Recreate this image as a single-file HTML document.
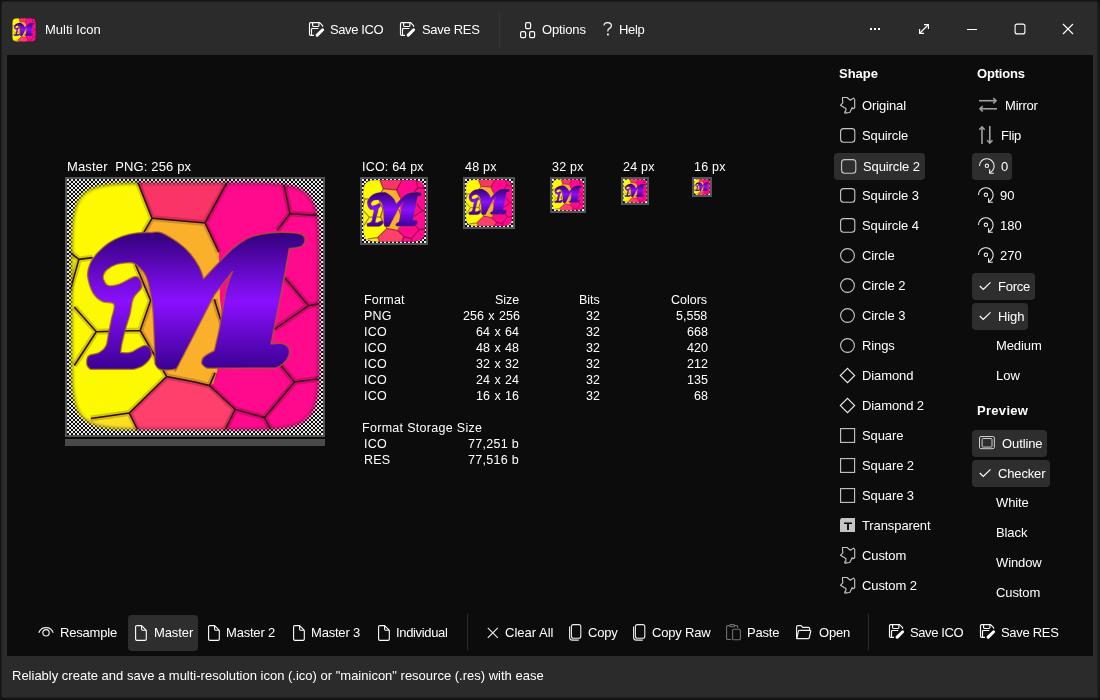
<!DOCTYPE html><html><head><meta charset="utf-8"><style>
html,body{margin:0;padding:0;width:1100px;height:700px;overflow:hidden;background:#2b2b2b;}
body{position:relative;font-family:"Liberation Sans",sans-serif;color:#fff;}
.t{position:absolute;white-space:nowrap;line-height:1;will-change:transform;}
.r{position:absolute;}
.s{position:absolute;overflow:visible;}
.chk{position:absolute;background-color:#e8e8e8;background-image:linear-gradient(45deg,#0d0d0d 25%,transparent 25%,transparent 75%,#0d0d0d 75%),linear-gradient(45deg,#0d0d0d 25%,transparent 25%,transparent 75%,#0d0d0d 75%);background-size:4px 4px;background-position:0 0,2px 2px;}

</style></head><body>
<svg width="0" height="0" style="position:absolute">
<defs>
<linearGradient id="mg" gradientUnits="userSpaceOnUse" x1="0" y1="54" x2="0" y2="191">
<stop offset="0" stop-color="#33007a"/><stop offset="0.5" stop-color="#8a10ff"/><stop offset="1" stop-color="#3a0090"/></linearGradient>
<filter id="bl2" x="-10%" y="-10%" width="120%" height="120%"><feGaussianBlur stdDeviation="1.5"/></filter><mask id="rr" maskUnits="userSpaceOnUse" x="0" y="0" width="256" height="256"><path d="M252.50,127.25 L252.49,170.95 L252.45,180.52 L252.39,187.05 L252.31,192.16 L252.20,196.42 L252.06,200.09 L251.90,203.33 L251.72,206.25 L251.51,208.91 L251.28,211.36 L251.02,213.62 L250.73,215.73 L250.42,217.70 L250.08,219.55 L249.72,221.30 L249.33,222.95 L248.91,224.52 L248.47,226.00 L248.00,227.42 L247.50,228.77 L246.97,230.05 L246.41,231.28 L245.82,232.45 L245.20,233.57 L244.55,234.64 L243.86,235.66 L243.15,236.64 L242.40,237.58 L241.61,238.48 L240.79,239.33 L239.93,240.15 L239.03,240.94 L238.08,241.68 L237.10,242.40 L236.07,243.08 L235.00,243.73 L233.87,244.35 L232.70,244.93 L231.47,245.49 L230.18,246.02 L228.82,246.52 L227.40,246.99 L225.91,247.43 L224.34,247.84 L222.68,248.23 L220.92,248.59 L219.06,248.93 L217.08,249.24 L214.97,249.52 L212.70,249.78 L210.24,250.01 L207.57,250.22 L204.64,250.40 L201.38,250.56 L197.69,250.70 L193.42,250.81 L188.30,250.89 L181.74,250.95 L172.13,250.99 L128.25,251.00 L84.37,250.99 L74.76,250.95 L68.20,250.89 L63.08,250.81 L58.81,250.70 L55.12,250.56 L51.86,250.40 L48.93,250.22 L46.26,250.01 L43.80,249.78 L41.53,249.52 L39.42,249.24 L37.44,248.93 L35.58,248.59 L33.82,248.23 L32.16,247.84 L30.59,247.43 L29.10,246.99 L27.68,246.52 L26.32,246.02 L25.03,245.49 L23.80,244.93 L22.63,244.35 L21.50,243.73 L20.43,243.08 L19.40,242.40 L18.42,241.68 L17.47,240.94 L16.57,240.15 L15.71,239.33 L14.89,238.48 L14.10,237.58 L13.35,236.64 L12.64,235.66 L11.95,234.64 L11.30,233.57 L10.68,232.45 L10.09,231.28 L9.53,230.05 L9.00,228.77 L8.50,227.42 L8.03,226.00 L7.59,224.52 L7.17,222.95 L6.78,221.30 L6.42,219.55 L6.08,217.70 L5.77,215.73 L5.48,213.62 L5.22,211.36 L4.99,208.91 L4.78,206.25 L4.60,203.33 L4.44,200.09 L4.30,196.42 L4.19,192.16 L4.11,187.05 L4.05,180.52 L4.01,170.95 L4.00,127.26 L4.01,83.55 L4.05,73.98 L4.11,67.45 L4.19,62.34 L4.30,58.08 L4.44,54.41 L4.60,51.17 L4.78,48.25 L4.99,45.59 L5.22,43.14 L5.48,40.88 L5.77,38.77 L6.08,36.80 L6.42,34.95 L6.78,33.20 L7.17,31.55 L7.59,29.98 L8.03,28.50 L8.50,27.08 L9.00,25.73 L9.53,24.45 L10.09,23.22 L10.68,22.05 L11.30,20.93 L11.95,19.86 L12.64,18.84 L13.35,17.86 L14.10,16.92 L14.89,16.02 L15.71,15.17 L16.57,14.35 L17.47,13.56 L18.42,12.82 L19.40,12.10 L20.43,11.42 L21.50,10.77 L22.63,10.15 L23.80,9.57 L25.03,9.01 L26.32,8.48 L27.68,7.98 L29.10,7.51 L30.59,7.07 L32.16,6.66 L33.82,6.27 L35.58,5.91 L37.44,5.57 L39.42,5.26 L41.53,4.98 L43.80,4.72 L46.26,4.49 L48.93,4.28 L51.86,4.10 L55.12,3.94 L58.81,3.80 L63.08,3.69 L68.20,3.61 L74.76,3.55 L84.37,3.51 L128.25,3.50 L172.13,3.51 L181.74,3.55 L188.30,3.61 L193.42,3.69 L197.69,3.80 L201.38,3.94 L204.64,4.10 L207.57,4.28 L210.24,4.49 L212.70,4.72 L214.97,4.98 L217.08,5.26 L219.06,5.57 L220.92,5.91 L222.68,6.27 L224.34,6.66 L225.91,7.07 L227.40,7.51 L228.82,7.98 L230.18,8.48 L231.47,9.01 L232.70,9.57 L233.87,10.15 L235.00,10.77 L236.07,11.42 L237.10,12.10 L238.08,12.82 L239.03,13.56 L239.93,14.35 L240.79,15.17 L241.61,16.02 L242.40,16.92 L243.15,17.86 L243.86,18.84 L244.55,19.86 L245.20,20.93 L245.82,22.05 L246.41,23.22 L246.97,24.45 L247.50,25.73 L248.00,27.08 L248.47,28.50 L248.91,29.98 L249.33,31.55 L249.72,33.20 L250.08,34.95 L250.42,36.80 L250.73,38.77 L251.02,40.88 L251.28,43.14 L251.51,45.59 L251.72,48.25 L251.90,51.17 L252.06,54.41 L252.20,58.08 L252.31,62.34 L252.39,67.45 L252.45,73.98 L252.49,83.55 Z" fill="#fff" filter="url(#bl2)"/></mask>
<filter id="bl" x="-10%" y="-10%" width="120%" height="120%"><feGaussianBlur stdDeviation="1.6"/></filter>
<symbol id="ico" viewBox="0 0 256 256">
<g mask="url(#rr)">
<rect width="256" height="256" fill="#ff0a8c"/>
<path d="M69.5,0.0 L161.8,0.0 L138.0,44.0 L85.0,39.3 Z" fill="#fb3468"/>
<path d="M99.6,197.5 L128.0,203.0 L142.6,206.6 L168.2,230.4 L155.4,256.0 L73.1,256.0 L62.2,234.0 Z" fill="#ff3f6c"/>
<path d="M85.0,39.3 L138.0,44.0 L151.8,73.1 L153.0,121.0 L155.6,140.3 L150.5,190.5 L146.6,204.6 L142.6,206.6 L128.0,203.0 L99.6,197.5 L73.2,151.5 L83.6,121.4 L68.7,86.0 L77.0,53.0 Z" fill="#fbb02c"/>
<path d="M0.0,0.0 L69.5,0.0 L85.0,39.3 L77.0,53.0 L68.7,86.0 L83.6,121.4 L73.2,151.5 L99.6,197.5 L62.2,234.0 L73.1,256.0 L0.0,256.0 Z" fill="#fcf900"/>
<path d="M0,241 L23.8,239.5 L62.2,234 L73.1,256 L0,256 Z" fill="#fde020"/>
<path d="M69.5,0.0 L85.0,39.3 L138.0,44.0 L161.8,0.0 M85.0,39.3 L77.0,53.0 L68.7,86.0 L83.6,121.4 L73.2,151.5 M138.0,44.0 L151.8,73.1 M215.8,0.0 L223.0,34.7 L256.0,36.6 M223.0,34.7 L210.3,51.2 M0.0,71.0 L11.9,80.4 L25.6,78.6 M11.9,80.4 L2.7,113.0 M7.3,128.0 L29.3,152.7 L73.2,151.5 M29.3,152.7 L7.3,186.5 M73.2,151.5 L99.6,197.5 L128.0,203.0 L142.6,206.6 M99.6,197.5 L62.2,234.0 L23.8,239.5 M62.2,234.0 L73.1,256.0 M142.6,206.6 L168.2,230.4 L197.5,238.6 L227.6,203.0 L256.0,199.3 M168.2,230.4 L155.4,256.0 M197.5,238.6 L206.6,256.0 M227.6,203.0 L213.9,186.5 M207.3,150.3 L241.6,126.7 L256.0,124.0 M218.0,98.9 L241.6,126.7 M147.3,120.3 L155.9,148.1 M142.6,206.6 L148.1,193.8" fill="none" stroke="#000" stroke-opacity="0.18" stroke-width="6"/>
<path d="M69.5,0.0 L85.0,39.3 L138.0,44.0 L161.8,0.0 M85.0,39.3 L77.0,53.0 L68.7,86.0 L83.6,121.4 L73.2,151.5 M138.0,44.0 L151.8,73.1 M215.8,0.0 L223.0,34.7 L256.0,36.6 M223.0,34.7 L210.3,51.2 M0.0,71.0 L11.9,80.4 L25.6,78.6 M11.9,80.4 L2.7,113.0 M7.3,128.0 L29.3,152.7 L73.2,151.5 M29.3,152.7 L7.3,186.5 M73.2,151.5 L99.6,197.5 L128.0,203.0 L142.6,206.6 M99.6,197.5 L62.2,234.0 L23.8,239.5 M62.2,234.0 L73.1,256.0 M142.6,206.6 L168.2,230.4 L197.5,238.6 L227.6,203.0 L256.0,199.3 M168.2,230.4 L155.4,256.0 M197.5,238.6 L206.6,256.0 M227.6,203.0 L213.9,186.5 M207.3,150.3 L241.6,126.7 L256.0,124.0 M218.0,98.9 L241.6,126.7 M147.3,120.3 L155.9,148.1 M142.6,206.6 L148.1,193.8" fill="none" stroke="#3a0a14" stroke-width="1.6"/>
<path d="M252.50,127.25 L252.49,170.95 L252.45,180.52 L252.39,187.05 L252.31,192.16 L252.20,196.42 L252.06,200.09 L251.90,203.33 L251.72,206.25 L251.51,208.91 L251.28,211.36 L251.02,213.62 L250.73,215.73 L250.42,217.70 L250.08,219.55 L249.72,221.30 L249.33,222.95 L248.91,224.52 L248.47,226.00 L248.00,227.42 L247.50,228.77 L246.97,230.05 L246.41,231.28 L245.82,232.45 L245.20,233.57 L244.55,234.64 L243.86,235.66 L243.15,236.64 L242.40,237.58 L241.61,238.48 L240.79,239.33 L239.93,240.15 L239.03,240.94 L238.08,241.68 L237.10,242.40 L236.07,243.08 L235.00,243.73 L233.87,244.35 L232.70,244.93 L231.47,245.49 L230.18,246.02 L228.82,246.52 L227.40,246.99 L225.91,247.43 L224.34,247.84 L222.68,248.23 L220.92,248.59 L219.06,248.93 L217.08,249.24 L214.97,249.52 L212.70,249.78 L210.24,250.01 L207.57,250.22 L204.64,250.40 L201.38,250.56 L197.69,250.70 L193.42,250.81 L188.30,250.89 L181.74,250.95 L172.13,250.99 L128.25,251.00 L84.37,250.99 L74.76,250.95 L68.20,250.89 L63.08,250.81 L58.81,250.70 L55.12,250.56 L51.86,250.40 L48.93,250.22 L46.26,250.01 L43.80,249.78 L41.53,249.52 L39.42,249.24 L37.44,248.93 L35.58,248.59 L33.82,248.23 L32.16,247.84 L30.59,247.43 L29.10,246.99 L27.68,246.52 L26.32,246.02 L25.03,245.49 L23.80,244.93 L22.63,244.35 L21.50,243.73 L20.43,243.08 L19.40,242.40 L18.42,241.68 L17.47,240.94 L16.57,240.15 L15.71,239.33 L14.89,238.48 L14.10,237.58 L13.35,236.64 L12.64,235.66 L11.95,234.64 L11.30,233.57 L10.68,232.45 L10.09,231.28 L9.53,230.05 L9.00,228.77 L8.50,227.42 L8.03,226.00 L7.59,224.52 L7.17,222.95 L6.78,221.30 L6.42,219.55 L6.08,217.70 L5.77,215.73 L5.48,213.62 L5.22,211.36 L4.99,208.91 L4.78,206.25 L4.60,203.33 L4.44,200.09 L4.30,196.42 L4.19,192.16 L4.11,187.05 L4.05,180.52 L4.01,170.95 L4.00,127.26 L4.01,83.55 L4.05,73.98 L4.11,67.45 L4.19,62.34 L4.30,58.08 L4.44,54.41 L4.60,51.17 L4.78,48.25 L4.99,45.59 L5.22,43.14 L5.48,40.88 L5.77,38.77 L6.08,36.80 L6.42,34.95 L6.78,33.20 L7.17,31.55 L7.59,29.98 L8.03,28.50 L8.50,27.08 L9.00,25.73 L9.53,24.45 L10.09,23.22 L10.68,22.05 L11.30,20.93 L11.95,19.86 L12.64,18.84 L13.35,17.86 L14.10,16.92 L14.89,16.02 L15.71,15.17 L16.57,14.35 L17.47,13.56 L18.42,12.82 L19.40,12.10 L20.43,11.42 L21.50,10.77 L22.63,10.15 L23.80,9.57 L25.03,9.01 L26.32,8.48 L27.68,7.98 L29.10,7.51 L30.59,7.07 L32.16,6.66 L33.82,6.27 L35.58,5.91 L37.44,5.57 L39.42,5.26 L41.53,4.98 L43.80,4.72 L46.26,4.49 L48.93,4.28 L51.86,4.10 L55.12,3.94 L58.81,3.80 L63.08,3.69 L68.20,3.61 L74.76,3.55 L84.37,3.51 L128.25,3.50 L172.13,3.51 L181.74,3.55 L188.30,3.61 L193.42,3.69 L197.69,3.80 L201.38,3.94 L204.64,4.10 L207.57,4.28 L210.24,4.49 L212.70,4.72 L214.97,4.98 L217.08,5.26 L219.06,5.57 L220.92,5.91 L222.68,6.27 L224.34,6.66 L225.91,7.07 L227.40,7.51 L228.82,7.98 L230.18,8.48 L231.47,9.01 L232.70,9.57 L233.87,10.15 L235.00,10.77 L236.07,11.42 L237.10,12.10 L238.08,12.82 L239.03,13.56 L239.93,14.35 L240.79,15.17 L241.61,16.02 L242.40,16.92 L243.15,17.86 L243.86,18.84 L244.55,19.86 L245.20,20.93 L245.82,22.05 L246.41,23.22 L246.97,24.45 L247.50,25.73 L248.00,27.08 L248.47,28.50 L248.91,29.98 L249.33,31.55 L249.72,33.20 L250.08,34.95 L250.42,36.80 L250.73,38.77 L251.02,40.88 L251.28,43.14 L251.51,45.59 L251.72,48.25 L251.90,51.17 L252.06,54.41 L252.20,58.08 L252.31,62.34 L252.39,67.45 L252.45,73.98 L252.49,83.55 Z" fill="none" stroke="#000" stroke-opacity="0.3" stroke-width="4" filter="url(#bl)"/>
</g>
<path d="M20.70,97.40 C20.13,92.45 21.47,88.70 23.00,84.90 C24.53,81.10 26.85,78.03 29.90,74.60 C32.95,71.17 37.12,67.17 41.30,64.30 C45.48,61.43 50.23,59.12 55.00,57.40 C59.77,55.68 65.13,54.67 69.90,54.00 C74.67,53.33 79.42,53.40 83.60,53.40 C87.78,53.40 90.10,52.07 95.00,54.00 C99.90,55.93 108.22,61.45 113.00,65.00 C117.78,68.55 120.48,71.45 123.70,75.30 C126.92,79.15 130.15,84.00 132.30,88.10 C134.45,92.20 136.60,99.90 136.60,99.90 C136.60,99.90 144.40,91.17 149.40,86.00 C154.40,80.83 160.88,73.55 166.60,68.90 C172.32,64.25 177.63,60.60 183.70,58.10 C189.77,55.60 195.50,54.60 203.00,53.90 C210.50,53.20 223.20,53.47 228.70,53.90 C234.20,54.33 234.45,55.23 236.00,56.50 C237.55,57.77 238.17,59.75 238.00,61.50 C237.83,63.25 236.67,65.75 235.00,67.00 C233.33,68.25 230.12,68.58 228.00,69.00 C225.88,69.42 222.30,69.50 222.30,69.50 C222.30,69.50 218.12,93.55 215.90,105.30 C213.68,117.05 210.98,130.05 209.00,140.00 C207.02,149.95 204.00,165.00 204.00,165.00 C204.00,165.00 210.87,163.80 213.70,164.30 C216.53,164.80 219.62,166.05 221.00,168.00 C222.38,169.95 222.67,173.33 222.00,176.00 C221.33,178.67 219.10,181.85 217.00,184.00 C214.90,186.15 209.40,188.90 209.40,188.90 C209.40,188.90 140.00,189.20 140.00,189.20 C140.00,189.20 135.67,186.70 135.00,185.00 C134.33,183.30 135.00,180.67 136.00,179.00 C137.00,177.33 139.12,176.22 141.00,175.00 C142.88,173.78 147.30,171.70 147.30,171.70 C147.30,171.70 150.65,158.10 152.60,148.10 C154.55,138.10 156.85,120.98 159.00,111.70 C161.15,102.42 165.50,92.40 165.50,92.40 C165.50,92.40 147.30,116.00 147.30,116.00 C147.30,116.00 118.45,172.97 111.90,185.30 C105.35,197.63 109.98,189.05 108.00,190.00 C106.02,190.95 102.67,191.00 100.00,191.00 C97.33,191.00 94.00,191.00 92.00,190.00 C90.00,189.00 88.00,185.00 88.00,185.00 C88.00,185.00 87.85,174.88 87.50,166.00 C87.15,157.12 86.55,140.27 85.90,131.70 C85.25,123.13 84.75,120.32 83.60,114.60 C82.45,108.88 80.93,101.83 79.00,97.40 C77.07,92.97 74.10,90.18 72.00,88.00 C69.90,85.82 68.28,85.02 66.40,84.30 C64.52,83.58 63.55,83.52 60.70,83.70 C57.85,83.88 52.73,84.25 49.30,85.40 C45.87,86.55 42.23,88.83 40.10,90.60 C37.97,92.37 37.07,94.28 36.50,96.00 C35.93,97.72 35.90,99.13 36.70,100.90 C37.50,102.67 38.82,105.85 41.30,106.60 C43.78,107.35 48.37,106.35 51.60,105.40 C54.83,104.45 57.85,102.23 60.70,100.90 C63.55,99.57 66.60,97.40 68.70,97.40 C70.80,97.40 72.35,98.98 73.30,100.90 C74.25,102.82 75.55,105.87 74.40,108.90 C73.25,111.93 68.30,114.75 66.40,119.10 C64.50,123.45 64.32,129.85 63.00,135.00 C61.68,140.15 59.92,144.72 58.50,150.00 C57.08,155.28 54.50,166.70 54.50,166.70 C54.50,166.70 53.60,173.60 53.60,173.60 C53.60,173.60 60.28,174.17 63.00,173.60 C65.72,173.03 67.62,171.35 69.90,170.20 C72.18,169.05 74.58,167.00 76.70,166.70 C78.82,166.40 81.28,166.97 82.60,168.40 C83.92,169.83 84.73,173.15 84.60,175.30 C84.47,177.45 83.40,179.30 81.80,181.30 C80.20,183.30 77.55,185.80 75.00,187.30 C72.45,188.80 66.50,190.30 66.50,190.30 C66.50,190.30 23.60,190.30 23.60,190.30 C23.60,190.30 20.68,188.28 20.10,186.50 C19.52,184.72 19.67,181.32 20.10,179.60 C20.53,177.88 20.68,177.20 22.70,176.20 C24.72,175.20 29.48,175.18 32.20,173.60 C34.92,172.02 37.43,169.98 39.00,166.70 C40.57,163.42 40.73,158.18 41.60,153.90 C42.47,149.62 43.30,145.75 44.20,141.00 C45.10,136.25 48.43,128.47 47.00,125.40 C45.57,122.33 39.03,124.40 35.60,122.60 C32.17,120.80 28.88,118.80 26.40,114.60 C23.92,110.40 21.27,102.35 20.70,97.40 Z" fill="url(#mg)" stroke="#a86020" stroke-opacity="0.7" stroke-width="1.5" stroke-linejoin="round"/>
</symbol>
</defs></svg>
<div class="r" style="left:0px;top:0px;width:1100px;height:1px;background:#141414;"></div>
<div class="r" style="left:0px;top:1px;width:1100px;height:1px;background:#1f1f1f;"></div>
<div class="r" style="left:0px;top:0px;width:1px;height:700px;background:#141414;"></div>
<div class="r" style="left:1px;top:1px;width:1px;height:697px;background:#1f1f1f;"></div>
<div class="r" style="left:1098px;top:0px;width:2px;height:700px;background:#191919;"></div>
<div class="r" style="left:1097px;top:1px;width:1px;height:697px;background:#222222;"></div>
<div class="r" style="left:0px;top:698px;width:1100px;height:2px;background:#141414;"></div>
<div class="r" style="left:1px;top:697px;width:1098px;height:1px;background:#202020;"></div>
<svg class="s" style="left:0px;top:0px" width="8" height="8" viewBox="0 0 8 8"><path transform="rotate(0 4 4)" d="M0,0 H8 A8,8 0 0 0 0,8 Z" fill="#141414"/></svg>
<svg class="s" style="left:1092px;top:0px" width="8" height="8" viewBox="0 0 8 8"><path transform="rotate(90 4 4)" d="M0,0 H8 A8,8 0 0 0 0,8 Z" fill="#141414"/></svg>
<svg class="s" style="left:1092px;top:692px" width="8" height="8" viewBox="0 0 8 8"><path transform="rotate(180 4 4)" d="M0,0 H8 A8,8 0 0 0 0,8 Z" fill="#141414"/></svg>
<svg class="s" style="left:0px;top:692px" width="8" height="8" viewBox="0 0 8 8"><path transform="rotate(270 4 4)" d="M0,0 H8 A8,8 0 0 0 0,8 Z" fill="#141414"/></svg>
<div class="r" style="left:7px;top:55px;width:1086px;height:601px;background:#0c0c0c;"></div>
<svg class="s" style="left:12px;top:18px;" width="24" height="24" viewBox="0 0 24 24"><use href="#ico" x="0" y="0" width="24" height="24"/></svg>
<div class="t" style="top:23px;font-size:13px;left:45px;">Multi Icon</div>
<svg class="s" style="left:309px;top:22px;" width="15" height="15" viewBox="0 0 15 15"><g fill="none" stroke="#fff" stroke-width="1.15" stroke-linejoin="round"><path d="M5,13.4 H1.6 a1.1,1.1 0 0 1 -1.1,-1.1 V1.7 a1.1,1.1 0 0 1 1.1,-1.1 H10.6 L13.6,3.6 V4.8"/><path d="M3.6,0.8 V3.6 a0.9,0.9 0 0 0 0.9,0.9 H9 a0.9,0.9 0 0 0 0.9,-0.9 V0.8"/><path d="M2.5,13.2 V7.4 a0.9,0.9 0 0 1 0.9,-0.9 H9.3"/></g><path d="M6.9,14.6 L6.6,12.6 L12.6,6.7 a1.45,1.45 0 0 1 2.1,2.1 L8.8,14.8 Z" fill="#fff"/></svg>
<div class="t" style="top:23px;font-size:13px;letter-spacing:-0.4px;left:330px;">Save ICO</div>
<svg class="s" style="left:400px;top:22px;" width="15" height="15" viewBox="0 0 15 15"><g fill="none" stroke="#fff" stroke-width="1.15" stroke-linejoin="round"><path d="M5,13.4 H1.6 a1.1,1.1 0 0 1 -1.1,-1.1 V1.7 a1.1,1.1 0 0 1 1.1,-1.1 H10.6 L13.6,3.6 V4.8"/><path d="M3.6,0.8 V3.6 a0.9,0.9 0 0 0 0.9,0.9 H9 a0.9,0.9 0 0 0 0.9,-0.9 V0.8"/><path d="M2.5,13.2 V7.4 a0.9,0.9 0 0 1 0.9,-0.9 H9.3"/></g><path d="M6.9,14.6 L6.6,12.6 L12.6,6.7 a1.45,1.45 0 0 1 2.1,2.1 L8.8,14.8 Z" fill="#fff"/></svg>
<div class="t" style="top:23px;font-size:13px;letter-spacing:-0.3px;left:421.5px;">Save RES</div>
<div class="r" style="left:499px;top:12px;width:1px;height:36px;background:#363636;"></div>
<svg class="s" style="left:520px;top:22px;" width="16" height="16" viewBox="0 0 16 16"><g fill="none" stroke="#fff" stroke-width="1.2"><rect x="5.6" y="0.6" width="5" height="6" rx="1.3"/><rect x="0.6" y="9.6" width="5" height="6" rx="1.3"/><rect x="9.6" y="9.6" width="5" height="6" rx="1.3"/></g></svg>
<div class="t" style="top:23px;font-size:13px;letter-spacing:-0.15px;left:541.5px;">Options</div>
<svg class="s" style="left:603px;top:22px;" width="10" height="15" viewBox="0 0 10 15"><path d="M1,3.6 C1,1.6 2.6,0.6 4.6,0.6 C6.8,0.6 8.4,1.8 8.4,3.8 C8.4,5.6 6.9,6.3 5.6,7.1 C4.9,7.6 4.8,8.1 4.8,9.4" fill="none" stroke="#fff" stroke-width="1.2"/><rect x="4" y="11.6" width="1.8" height="1.8" fill="#fff"/></svg>
<div class="t" style="top:23px;font-size:13px;letter-spacing:-0.3px;left:618.5px;">Help</div>
<div class="r" style="left:870px;top:28px;width:2px;height:2px;background:#fff;"></div>
<div class="r" style="left:874px;top:28px;width:2px;height:2px;background:#fff;"></div>
<div class="r" style="left:878px;top:28px;width:2px;height:2px;background:#fff;"></div>
<svg class="s" style="left:918px;top:23px;" width="12" height="12" viewBox="0 0 12 12"><g fill="none" stroke="#fff" stroke-width="1.1"><path d="M2,10 L10,2"/><path d="M6,1.6 H10.4 V6"/><path d="M1.6,6 V10.4 H6"/></g></svg>
<div class="r" style="left:967px;top:29px;width:10px;height:1px;background:#fff;"></div>
<svg class="s" style="left:1014px;top:23px;" width="12" height="12" viewBox="0 0 12 12"><rect x="1.1" y="1.1" width="9.8" height="9.8" rx="2" fill="none" stroke="#fff" stroke-width="1.1"/></svg>
<svg class="s" style="left:1062px;top:23px;" width="12" height="12" viewBox="0 0 12 12"><path d="M1,1 L11,11 M11,1 L1,11" stroke="#fff" stroke-width="1.1"/></svg>
<div class="t" style="top:160px;font-size:13px;letter-spacing:0.15px;left:67px;">Master&nbsp;&nbsp;PNG: 256 px</div>
<div class="r" style="left:65px;top:177px;width:260px;height:260px;background:#555555;"></div>
<div class="chk" style="left:67px;top:179px;width:256px;height:256px;"></div>
<svg class="s" style="left:67px;top:179px;" width="256" height="256" viewBox="0 0 256 256"><use href="#ico" width="256" height="256"/></svg>
<div class="r" style="left:65px;top:439px;width:260px;height:7px;background:#4a4a4a;"></div>
<div class="t" style="top:161px;font-size:12.5px;letter-spacing:0.2px;left:362px;">ICO: 64 px</div>
<div class="r" style="left:360px;top:177px;width:68px;height:68px;background:#555555;"></div>
<div class="chk" style="left:362px;top:179px;width:64px;height:64px;"></div>
<svg class="s" style="left:362px;top:179px;" width="64" height="64" viewBox="0 0 64 64"><use href="#ico" width="64" height="64"/></svg>
<div class="t" style="top:161px;font-size:12.5px;letter-spacing:0.2px;left:464.5px;">48 px</div>
<div class="r" style="left:463px;top:177px;width:52px;height:52px;background:#555555;"></div>
<div class="chk" style="left:465px;top:179px;width:48px;height:48px;"></div>
<svg class="s" style="left:465px;top:179px;" width="48" height="48" viewBox="0 0 48 48"><use href="#ico" width="48" height="48"/></svg>
<div class="t" style="top:161px;font-size:12.5px;letter-spacing:0.2px;left:551.5px;">32 px</div>
<div class="r" style="left:550px;top:177px;width:36px;height:36px;background:#555555;"></div>
<div class="chk" style="left:552px;top:179px;width:32px;height:32px;"></div>
<svg class="s" style="left:552px;top:179px;" width="32" height="32" viewBox="0 0 32 32"><use href="#ico" width="32" height="32"/></svg>
<div class="t" style="top:161px;font-size:12.5px;letter-spacing:0.2px;left:623px;">24 px</div>
<div class="r" style="left:621px;top:177px;width:28px;height:28px;background:#555555;"></div>
<div class="chk" style="left:623px;top:179px;width:24px;height:24px;"></div>
<svg class="s" style="left:623px;top:179px;" width="24" height="24" viewBox="0 0 24 24"><use href="#ico" width="24" height="24"/></svg>
<div class="t" style="top:161px;font-size:12.5px;letter-spacing:0.2px;left:694px;">16 px</div>
<div class="r" style="left:692px;top:177px;width:20px;height:20px;background:#555555;"></div>
<div class="chk" style="left:694px;top:179px;width:16px;height:16px;"></div>
<svg class="s" style="left:694px;top:179px;" width="16" height="16" viewBox="0 0 16 16"><use href="#ico" width="16" height="16"/></svg>
<div class="t" style="top:294px;font-size:12.5px;letter-spacing:0.2px;left:364px;">Format</div>
<div class="t" style="top:294px;font-size:12.5px;right:580.5px;">Size</div>
<div class="t" style="top:294px;font-size:12.5px;right:500.5px;">Bits</div>
<div class="t" style="top:294px;font-size:12.5px;right:392.5px;">Colors</div>
<div class="t" style="top:310px;font-size:12.5px;letter-spacing:0.2px;left:364px;">PNG</div>
<div class="t" style="top:310px;font-size:12.5px;right:580.5px;word-spacing:1px;">256 x 256</div>
<div class="t" style="top:310px;font-size:12.5px;right:500.5px;">32</div>
<div class="t" style="top:310px;font-size:12.5px;right:392.5px;">5,558</div>
<div class="t" style="top:326px;font-size:12.5px;letter-spacing:0.2px;left:364px;">ICO</div>
<div class="t" style="top:326px;font-size:12.5px;right:580.5px;word-spacing:1px;">64 x 64</div>
<div class="t" style="top:326px;font-size:12.5px;right:500.5px;">32</div>
<div class="t" style="top:326px;font-size:12.5px;right:392.5px;">668</div>
<div class="t" style="top:342px;font-size:12.5px;letter-spacing:0.2px;left:364px;">ICO</div>
<div class="t" style="top:342px;font-size:12.5px;right:580.5px;word-spacing:1px;">48 x 48</div>
<div class="t" style="top:342px;font-size:12.5px;right:500.5px;">32</div>
<div class="t" style="top:342px;font-size:12.5px;right:392.5px;">420</div>
<div class="t" style="top:358px;font-size:12.5px;letter-spacing:0.2px;left:364px;">ICO</div>
<div class="t" style="top:358px;font-size:12.5px;right:580.5px;word-spacing:1px;">32 x 32</div>
<div class="t" style="top:358px;font-size:12.5px;right:500.5px;">32</div>
<div class="t" style="top:358px;font-size:12.5px;right:392.5px;">212</div>
<div class="t" style="top:374px;font-size:12.5px;letter-spacing:0.2px;left:364px;">ICO</div>
<div class="t" style="top:374px;font-size:12.5px;right:580.5px;word-spacing:1px;">24 x 24</div>
<div class="t" style="top:374px;font-size:12.5px;right:500.5px;">32</div>
<div class="t" style="top:374px;font-size:12.5px;right:392.5px;">135</div>
<div class="t" style="top:390px;font-size:12.5px;letter-spacing:0.2px;left:364px;">ICO</div>
<div class="t" style="top:390px;font-size:12.5px;right:580.5px;word-spacing:1px;">16 x 16</div>
<div class="t" style="top:390px;font-size:12.5px;right:500.5px;">32</div>
<div class="t" style="top:390px;font-size:12.5px;right:392.5px;">68</div>
<div class="t" style="top:422px;font-size:12.5px;letter-spacing:0.3px;left:362px;">Format Storage Size</div>
<div class="t" style="top:438px;font-size:12.5px;letter-spacing:0.2px;left:364px;">ICO</div>
<div class="t" style="top:438px;font-size:12.5px;letter-spacing:0.3px;right:580.5px;">77,251 b</div>
<div class="t" style="top:454px;font-size:12.5px;letter-spacing:0.2px;left:364px;">RES</div>
<div class="t" style="top:454px;font-size:12.5px;letter-spacing:0.3px;right:580.5px;">77,516 b</div>
<div class="t" style="top:67px;font-size:13px;font-weight:700;left:838.5px;">Shape</div>
<div class="t" style="top:67px;font-size:13px;font-weight:700;letter-spacing:-0.2px;left:976.5px;">Options</div>
<div class="t" style="top:404px;font-size:13px;font-weight:700;letter-spacing:0.3px;left:976.5px;">Preview</div>
<svg class="s" style="left:840px;top:97px;" width="16" height="17" viewBox="0 0 16 17"><path d="M2.5,0.5 L7.0,0.5 L10.4,3.2 L13.5,1.1 L14.7,2.5 L14.7,10.7 L13.1,11.8 L12.1,10.7 L10.4,14.2 L9.7,15.5 L6.3,15.9 L4.9,16.2 L4.6,15.2 L5.9,13.8 L5.9,11.4 L4.6,10.7 L0.5,8.3 L2.9,5.6 L2.5,2.9Z" fill="none" stroke="#c8c8c8" stroke-width="1.1" stroke-linejoin="round"/></svg>
<div class="t" style="top:99px;font-size:13px;letter-spacing:-0.1px;left:861.5px;">Original</div>
<svg class="s" style="left:840px;top:128px;" width="16" height="16" viewBox="0 0 16 16"><rect x="0.6" y="0.6" width="14.2" height="13.6" rx="3" fill="none" stroke="#c8c8c8" stroke-width="1.1"/></svg>
<div class="t" style="top:129px;font-size:13px;letter-spacing:-0.1px;left:861.5px;">Squircle</div>
<div class="r" style="left:834px;top:153px;width:91px;height:27px;background:#2e2e2e;border-radius:4px;"></div>
<svg class="s" style="left:841px;top:159px;" width="16" height="16" viewBox="0 0 16 16"><rect x="0.6" y="0.6" width="14.2" height="13.6" rx="3" fill="none" stroke="#c8c8c8" stroke-width="1.1"/></svg>
<div class="t" style="top:160px;font-size:13px;letter-spacing:-0.1px;left:862.5px;">Squircle 2</div>
<svg class="s" style="left:840px;top:188px;" width="16" height="16" viewBox="0 0 16 16"><rect x="0.6" y="0.6" width="14.2" height="13.6" rx="3" fill="none" stroke="#c8c8c8" stroke-width="1.1"/></svg>
<div class="t" style="top:189px;font-size:13px;letter-spacing:-0.1px;left:861.5px;">Squircle 3</div>
<svg class="s" style="left:840px;top:218px;" width="16" height="16" viewBox="0 0 16 16"><rect x="0.6" y="0.6" width="14.2" height="13.6" rx="3" fill="none" stroke="#c8c8c8" stroke-width="1.1"/></svg>
<div class="t" style="top:219px;font-size:13px;letter-spacing:-0.1px;left:861.5px;">Squircle 4</div>
<svg class="s" style="left:840px;top:248px;" width="16" height="16" viewBox="0 0 16 16"><circle cx="7.5" cy="7.5" r="6.9" fill="none" stroke="#c8c8c8" stroke-width="1.1"/></svg>
<div class="t" style="top:249px;font-size:13px;letter-spacing:-0.1px;left:861.5px;">Circle</div>
<svg class="s" style="left:840px;top:278px;" width="16" height="16" viewBox="0 0 16 16"><circle cx="7.5" cy="7.5" r="6.9" fill="none" stroke="#c8c8c8" stroke-width="1.1"/></svg>
<div class="t" style="top:279px;font-size:13px;letter-spacing:-0.1px;left:861.5px;">Circle 2</div>
<svg class="s" style="left:840px;top:308px;" width="16" height="16" viewBox="0 0 16 16"><circle cx="7.5" cy="7.5" r="6.9" fill="none" stroke="#c8c8c8" stroke-width="1.1"/></svg>
<div class="t" style="top:309px;font-size:13px;letter-spacing:-0.1px;left:861.5px;">Circle 3</div>
<svg class="s" style="left:840px;top:338px;" width="16" height="16" viewBox="0 0 16 16"><circle cx="7.5" cy="7.5" r="6.9" fill="none" stroke="#c8c8c8" stroke-width="1.1"/></svg>
<div class="t" style="top:339px;font-size:13px;letter-spacing:-0.1px;left:861.5px;">Rings</div>
<svg class="s" style="left:840px;top:368px;" width="16" height="16" viewBox="0 0 16 16"><path d="M7.5,0.3 L14.7,7.5 L7.5,14.7 L0.3,7.5 Z" fill="none" stroke="#eee" stroke-width="1.1"/></svg>
<div class="t" style="top:369px;font-size:13px;letter-spacing:-0.1px;left:861.5px;">Diamond</div>
<svg class="s" style="left:840px;top:398px;" width="16" height="16" viewBox="0 0 16 16"><path d="M7.5,0.3 L14.7,7.5 L7.5,14.7 L0.3,7.5 Z" fill="none" stroke="#eee" stroke-width="1.1"/></svg>
<div class="t" style="top:399px;font-size:13px;letter-spacing:-0.1px;left:861.5px;">Diamond 2</div>
<svg class="s" style="left:840px;top:428px;" width="16" height="16" viewBox="0 0 16 16"><rect x="0.6" y="0.6" width="14" height="13.8" fill="none" stroke="#c8c8c8" stroke-width="1.1"/></svg>
<div class="t" style="top:429px;font-size:13px;letter-spacing:-0.1px;left:861.5px;">Square</div>
<svg class="s" style="left:840px;top:458px;" width="16" height="16" viewBox="0 0 16 16"><rect x="0.6" y="0.6" width="14" height="13.8" fill="none" stroke="#c8c8c8" stroke-width="1.1"/></svg>
<div class="t" style="top:459px;font-size:13px;letter-spacing:-0.1px;left:861.5px;">Square 2</div>
<svg class="s" style="left:840px;top:488px;" width="16" height="16" viewBox="0 0 16 16"><rect x="0.6" y="0.6" width="14" height="13.8" fill="none" stroke="#c8c8c8" stroke-width="1.1"/></svg>
<div class="t" style="top:489px;font-size:13px;letter-spacing:-0.1px;left:861.5px;">Square 3</div>
<svg class="s" style="left:840px;top:518px;" width="16" height="16" viewBox="0 0 16 16"><path d="M1.5,0 H15 V14 H0 V1.5 Z" fill="#c4c4c4"/><path d="M4,4.5 H12 V6 H8.9 V11.9 H7.1 V6 H4 Z" fill="#000"/></svg>
<div class="t" style="top:519px;font-size:13px;letter-spacing:-0.1px;left:861.5px;">Transparent</div>
<svg class="s" style="left:840px;top:547px;" width="16" height="17" viewBox="0 0 16 17"><path d="M2.5,0.5 L7.0,0.5 L10.4,3.2 L13.5,1.1 L14.7,2.5 L14.7,10.7 L13.1,11.8 L12.1,10.7 L10.4,14.2 L9.7,15.5 L6.3,15.9 L4.9,16.2 L4.6,15.2 L5.9,13.8 L5.9,11.4 L4.6,10.7 L0.5,8.3 L2.9,5.6 L2.5,2.9Z" fill="none" stroke="#c8c8c8" stroke-width="1.1" stroke-linejoin="round"/></svg>
<div class="t" style="top:549px;font-size:13px;letter-spacing:-0.1px;left:861.5px;">Custom</div>
<svg class="s" style="left:840px;top:577px;" width="16" height="17" viewBox="0 0 16 17"><path d="M2.5,0.5 L7.0,0.5 L10.4,3.2 L13.5,1.1 L14.7,2.5 L14.7,10.7 L13.1,11.8 L12.1,10.7 L10.4,14.2 L9.7,15.5 L6.3,15.9 L4.9,16.2 L4.6,15.2 L5.9,13.8 L5.9,11.4 L4.6,10.7 L0.5,8.3 L2.9,5.6 L2.5,2.9Z" fill="none" stroke="#c8c8c8" stroke-width="1.1" stroke-linejoin="round"/></svg>
<div class="t" style="top:579px;font-size:13px;letter-spacing:-0.1px;left:861.5px;">Custom 2</div>
<svg class="s" style="left:979px;top:98px;" width="19" height="14" viewBox="0 0 19 14"><g stroke="#a0a0a0" stroke-width="1.6" fill="none"><path d="M0,2.7 H17"/><path d="M14.3,0 L17,2.7 L14.3,5.4"/><path d="M18,10.8 H1"/><path d="M3.7,8.1 L1,10.8 L3.7,13.5"/></g></svg>
<div class="t" style="top:99px;font-size:13px;letter-spacing:-0.2px;left:1004.5px;">Mirror</div>
<svg class="s" style="left:979px;top:126px;" width="14" height="19" viewBox="0 0 14 19"><g stroke="#a0a0a0" stroke-width="1.6" fill="none"><path d="M3,18 V1"/><path d="M0.3,3.7 L3,1 L5.7,3.7"/><path d="M10.8,0 V17"/><path d="M8.1,14.3 L10.8,17 L13.5,14.3"/></g></svg>
<div class="t" style="top:129px;font-size:13px;letter-spacing:-0.2px;left:1000.5px;">Flip</div>
<div class="r" style="left:972px;top:153px;width:40px;height:27px;background:#2e2e2e;border-radius:4px;"></div>
<svg class="s" style="left:979px;top:154px;" width="18" height="21" viewBox="0 0 18 21"><g fill="none" stroke="#eee" stroke-width="1.1"><path d="M0.5,12 A7.3,7.3 0 1 1 10.6,18.8"/><circle cx="7.9" cy="11.8" r="1.7"/><path d="M10.6,15.2 V19.3 H14.8" stroke-linejoin="miter"/></g></svg>
<div class="t" style="top:160px;font-size:13px;left:1000.5px;">0</div>
<svg class="s" style="left:978px;top:183px;" width="18" height="21" viewBox="0 0 18 21"><g fill="none" stroke="#eee" stroke-width="1.1"><path d="M0.5,12 A7.3,7.3 0 1 1 10.6,18.8"/><circle cx="7.9" cy="11.8" r="1.7"/><path d="M10.6,15.2 V19.3 H14.8" stroke-linejoin="miter"/></g></svg>
<div class="t" style="top:189px;font-size:13px;left:999.5px;">90</div>
<svg class="s" style="left:978px;top:213px;" width="18" height="21" viewBox="0 0 18 21"><g fill="none" stroke="#eee" stroke-width="1.1"><path d="M0.5,12 A7.3,7.3 0 1 1 10.6,18.8"/><circle cx="7.9" cy="11.8" r="1.7"/><path d="M10.6,15.2 V19.3 H14.8" stroke-linejoin="miter"/></g></svg>
<div class="t" style="top:219px;font-size:13px;left:999.5px;">180</div>
<svg class="s" style="left:978px;top:243px;" width="18" height="21" viewBox="0 0 18 21"><g fill="none" stroke="#eee" stroke-width="1.1"><path d="M0.5,12 A7.3,7.3 0 1 1 10.6,18.8"/><circle cx="7.9" cy="11.8" r="1.7"/><path d="M10.6,15.2 V19.3 H14.8" stroke-linejoin="miter"/></g></svg>
<div class="t" style="top:249px;font-size:13px;left:999.5px;">270</div>
<div class="r" style="left:972px;top:273px;width:63px;height:27px;background:#2e2e2e;border-radius:4px;"></div>
<svg class="s" style="left:979px;top:281px;" width="13" height="10" viewBox="0 0 13 10"><path d="M0.8,5 L4.3,8.5 L11.5,1.3" fill="none" stroke="#fff" stroke-width="1.2"/></svg>
<div class="t" style="top:280px;font-size:13px;letter-spacing:-0.25px;left:997.5px;">Force</div>
<div class="r" style="left:972px;top:303px;width:56px;height:27px;background:#2e2e2e;border-radius:4px;"></div>
<svg class="s" style="left:979px;top:311px;" width="13" height="10" viewBox="0 0 13 10"><path d="M0.8,5 L4.3,8.5 L11.5,1.3" fill="none" stroke="#fff" stroke-width="1.2"/></svg>
<div class="t" style="top:310px;font-size:13px;letter-spacing:-0.1px;left:997.5px;">High</div>
<div class="t" style="top:339px;font-size:13px;letter-spacing:-0.1px;left:996px;">Medium</div>
<div class="t" style="top:369px;font-size:13px;left:996px;">Low</div>
<div class="r" style="left:972px;top:430px;width:75px;height:27px;background:#2e2e2e;border-radius:4px;"></div>
<svg class="s" style="left:979px;top:436px;" width="17" height="15" viewBox="0 0 17 15"><rect x="0.5" y="0.5" width="14.9" height="12.2" rx="1.5" fill="none" stroke="#ccc" stroke-width="1"/><rect x="3.1" y="2.5" width="9.9" height="8.6" rx="1" fill="none" stroke="#ccc" stroke-width="1"/></svg>
<div class="t" style="top:437px;font-size:13px;letter-spacing:-0.1px;left:1001.5px;">Outline</div>
<div class="r" style="left:972px;top:460px;width:78px;height:27px;background:#2e2e2e;border-radius:4px;"></div>
<svg class="s" style="left:979px;top:468px;" width="13" height="10" viewBox="0 0 13 10"><path d="M0.8,5 L4.3,8.5 L11.5,1.3" fill="none" stroke="#fff" stroke-width="1.2"/></svg>
<div class="t" style="top:467px;font-size:13px;letter-spacing:-0.15px;left:997.5px;">Checker</div>
<div class="t" style="top:496px;font-size:13px;letter-spacing:-0.1px;left:996px;">White</div>
<div class="t" style="top:526px;font-size:13px;letter-spacing:-0.1px;left:996px;">Black</div>
<div class="t" style="top:556px;font-size:13px;letter-spacing:-0.1px;left:996px;">Window</div>
<div class="t" style="top:586px;font-size:13px;letter-spacing:-0.1px;left:996px;">Custom</div>
<svg class="s" style="left:38px;top:626px;" width="16" height="12" viewBox="0 0 16 12"><g fill="none" stroke="#eee" stroke-width="1.2"><path d="M0.8,6.8 A7.6,7.6 0 0 1 15.2,6.8"/><circle cx="8" cy="6.8" r="3.2"/></g></svg>
<div class="t" style="top:626px;font-size:13px;letter-spacing:-0.2px;left:60px;">Resample</div>
<div class="r" style="left:128px;top:615px;width:70px;height:36px;background:#2e2e2e;border-radius:4px;"></div>
<svg class="s" style="left:135px;top:625px;" width="12" height="16" viewBox="0 0 12 16"><path d="M1.8,0.6 H6.6 L11.3,5.3 V14.1 a1.3,1.3 0 0 1 -1.3,1.3 H1.9 a1.3,1.3 0 0 1 -1.3,-1.3 V1.9 a1.3,1.3 0 0 1 1.3,-1.3 Z M6.6,0.8 V3.9 a1.4,1.4 0 0 0 1.4,1.4 H11.2" fill="none" stroke="#fff" stroke-width="1.1" stroke-linejoin="round"/></svg>
<div class="t" style="top:626px;font-size:13px;letter-spacing:-0.1px;left:153.5px;">Master</div>
<svg class="s" style="left:208px;top:625px;" width="12" height="16" viewBox="0 0 12 16"><path d="M1.8,0.6 H6.6 L11.3,5.3 V14.1 a1.3,1.3 0 0 1 -1.3,1.3 H1.9 a1.3,1.3 0 0 1 -1.3,-1.3 V1.9 a1.3,1.3 0 0 1 1.3,-1.3 Z M6.6,0.8 V3.9 a1.4,1.4 0 0 0 1.4,1.4 H11.2" fill="none" stroke="#fff" stroke-width="1.1" stroke-linejoin="round"/></svg>
<div class="t" style="top:626px;font-size:13px;letter-spacing:-0.2px;left:226px;">Master 2</div>
<svg class="s" style="left:293px;top:625px;" width="12" height="16" viewBox="0 0 12 16"><path d="M1.8,0.6 H6.6 L11.3,5.3 V14.1 a1.3,1.3 0 0 1 -1.3,1.3 H1.9 a1.3,1.3 0 0 1 -1.3,-1.3 V1.9 a1.3,1.3 0 0 1 1.3,-1.3 Z M6.6,0.8 V3.9 a1.4,1.4 0 0 0 1.4,1.4 H11.2" fill="none" stroke="#fff" stroke-width="1.1" stroke-linejoin="round"/></svg>
<div class="t" style="top:626px;font-size:13px;letter-spacing:-0.2px;left:311px;">Master 3</div>
<svg class="s" style="left:378px;top:625px;" width="12" height="16" viewBox="0 0 12 16"><path d="M1.8,0.6 H6.6 L11.3,5.3 V14.1 a1.3,1.3 0 0 1 -1.3,1.3 H1.9 a1.3,1.3 0 0 1 -1.3,-1.3 V1.9 a1.3,1.3 0 0 1 1.3,-1.3 Z M6.6,0.8 V3.9 a1.4,1.4 0 0 0 1.4,1.4 H11.2" fill="none" stroke="#fff" stroke-width="1.1" stroke-linejoin="round"/></svg>
<div class="t" style="top:626px;font-size:13px;letter-spacing:-0.35px;left:396px;">Individual</div>
<div class="r" style="left:467px;top:614px;width:1px;height:36px;background:#2a2a2a;"></div>
<svg class="s" style="left:487px;top:627px;" width="12" height="12" viewBox="0 0 12 12"><path d="M0.8,0.8 L10.8,10.8 M10.8,0.8 L0.8,10.8" stroke="#eee" stroke-width="1.1"/></svg>
<div class="t" style="top:626px;font-size:13px;left:504.5px;">Clear All</div>
<svg class="s" style="left:569px;top:624px;" width="13" height="17" viewBox="0 0 13 17"><g fill="none" stroke="#eee" stroke-width="1.1"><rect x="2.4" y="0.6" width="9.4" height="13.6" rx="2"/><path d="M0.6,2.5 V13.5 a2.6,2.6 0 0 0 2.6,2.6 H9.8"/></g></svg>
<div class="t" style="top:626px;font-size:13px;letter-spacing:-0.2px;left:587.5px;">Copy</div>
<svg class="s" style="left:633px;top:624px;" width="13" height="17" viewBox="0 0 13 17"><g fill="none" stroke="#eee" stroke-width="1.1"><rect x="2.4" y="0.6" width="9.4" height="13.6" rx="2"/><path d="M0.6,2.5 V13.5 a2.6,2.6 0 0 0 2.6,2.6 H9.8"/></g></svg>
<div class="t" style="top:626px;font-size:13px;letter-spacing:-0.2px;left:651.5px;">Copy Raw</div>
<svg class="s" style="left:726px;top:624px;" width="16" height="17" viewBox="0 0 16 17"><g fill="none" stroke="#707070" stroke-width="1.1"><path d="M5.3,15.5 H1.6 a1,1 0 0 1 -1,-1 V2.6 a1,1 0 0 1 1,-1 H3.4 M8.8,1.6 H10.6 a1,1 0 0 1 1,1 V4"/><rect x="3.6" y="0.6" width="5" height="2.2" rx="1"/><rect x="6.6" y="5.2" width="7.8" height="10.6" rx="1.4"/></g></svg>
<div class="t" style="top:626px;font-size:13px;letter-spacing:-0.2px;left:746.5px;">Paste</div>
<svg class="s" style="left:795px;top:625px;" width="17" height="15" viewBox="0 0 17 15"><g fill="none" stroke="#eee" stroke-width="1.2" stroke-linejoin="round"><path d="M1.6,13.4 V2 a1.3,1.3 0 0 1 1.3,-1.3 H6.1 L7.6,2.4 H13.4 a1.3,1.3 0 0 1 1.3,1.3 V5"/><path d="M1.8,13.6 L3.3,6.4 a1.2,1.2 0 0 1 1.2,-1 H14.8 a0.9,0.9 0 0 1 0.9,1.1 L14.2,12.6 a1.2,1.2 0 0 1 -1.2,1 Z"/></g></svg>
<div class="t" style="top:626px;font-size:13px;letter-spacing:-0.2px;left:818.5px;">Open</div>
<div class="r" style="left:868px;top:614px;width:1px;height:36px;background:#2a2a2a;"></div>
<svg class="s" style="left:889px;top:624px;" width="15" height="15" viewBox="0 0 15 15"><g fill="none" stroke="#fff" stroke-width="1.15" stroke-linejoin="round"><path d="M5,13.4 H1.6 a1.1,1.1 0 0 1 -1.1,-1.1 V1.7 a1.1,1.1 0 0 1 1.1,-1.1 H10.6 L13.6,3.6 V4.8"/><path d="M3.6,0.8 V3.6 a0.9,0.9 0 0 0 0.9,0.9 H9 a0.9,0.9 0 0 0 0.9,-0.9 V0.8"/><path d="M2.5,13.2 V7.4 a0.9,0.9 0 0 1 0.9,-0.9 H9.3"/></g><path d="M6.9,14.6 L6.6,12.6 L12.6,6.7 a1.45,1.45 0 0 1 2.1,2.1 L8.8,14.8 Z" fill="#fff"/></svg>
<div class="t" style="top:626px;font-size:13px;letter-spacing:-0.4px;left:910px;">Save ICO</div>
<svg class="s" style="left:980px;top:624px;" width="15" height="15" viewBox="0 0 15 15"><g fill="none" stroke="#fff" stroke-width="1.15" stroke-linejoin="round"><path d="M5,13.4 H1.6 a1.1,1.1 0 0 1 -1.1,-1.1 V1.7 a1.1,1.1 0 0 1 1.1,-1.1 H10.6 L13.6,3.6 V4.8"/><path d="M3.6,0.8 V3.6 a0.9,0.9 0 0 0 0.9,0.9 H9 a0.9,0.9 0 0 0 0.9,-0.9 V0.8"/><path d="M2.5,13.2 V7.4 a0.9,0.9 0 0 1 0.9,-0.9 H9.3"/></g><path d="M6.9,14.6 L6.6,12.6 L12.6,6.7 a1.45,1.45 0 0 1 2.1,2.1 L8.8,14.8 Z" fill="#fff"/></svg>
<div class="t" style="top:626px;font-size:13px;letter-spacing:-0.3px;left:1001px;">Save RES</div>
<div class="t" style="top:669px;font-size:13px;left:11.5px;">Reliably create and save a multi-resolution icon (.ico) or "mainicon" resource (.res) with ease</div>
</body></html>
